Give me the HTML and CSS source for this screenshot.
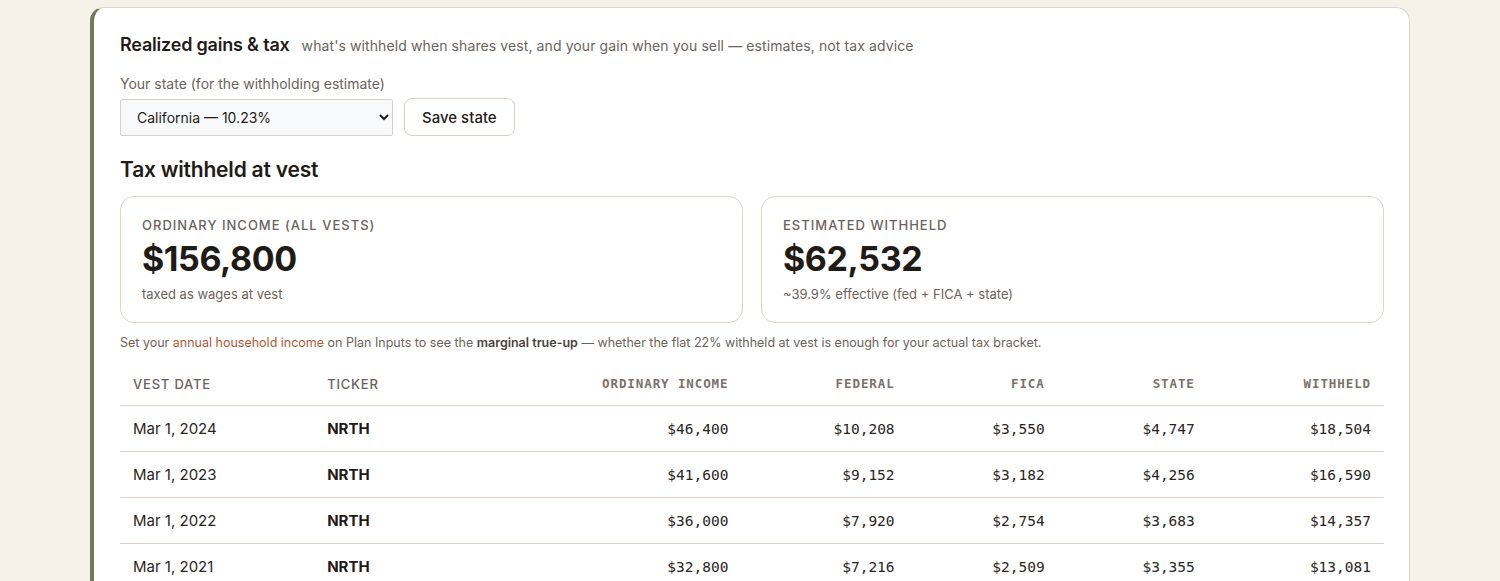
FILE: index.html
```html
<!DOCTYPE html>
<html lang="en">
<head>
    <meta charset="UTF-8">
    <meta name="viewport" content="width=device-width, initial-scale=1.0">
    <title>Realized gains &amp; tax</title>
    <link rel="stylesheet" href="styles.css">
</head>
<body>
    <section class="panel">
        <div class="panel-head">
            <h2>Realized gains &amp; tax</h2>
            <span class="panel-sub">what's withheld when shares vest, and your gain when you sell — estimates, not tax advice</span>
        </div>

        <label class="field-label" for="state">Your state (for the withholding estimate)</label>
        <div class="state-row">
            <select id="state">
                <option>California — 10.23%</option>
                <option>New York — 6.85%</option>
                <option>Washington — 0%</option>
                <option>Texas — 0%</option>
            </select>
            <button type="button" class="btn">Save state</button>
        </div>

        <h3>Tax withheld at vest</h3>
        <div class="stats">
            <div class="stat">
                <div class="stat-label">Ordinary income (all vests)</div>
                <div class="stat-value">$156,800</div>
                <div class="stat-sub">taxed as wages at vest</div>
            </div>
            <div class="stat">
                <div class="stat-label">Estimated withheld</div>
                <div class="stat-value">$62,532</div>
                <div class="stat-sub">~39.9% effective (fed + FICA + state)</div>
            </div>
        </div>

        <p class="note">Set your <a href="#">annual household income</a> on Plan Inputs to see the <strong>marginal true-up</strong> — whether the flat 22% withheld at vest is enough for your actual tax bracket.</p>

        <table class="vests">
            <colgroup>
                <col class="c-date">
                <col class="c-ticker">
                <col class="c-income">
                <col class="c-fed">
                <col class="c-fica">
                <col class="c-state">
                <col class="c-total">
            </colgroup>
            <thead>
                <tr>
                    <th>Vest date</th>
                    <th>Ticker</th>
                    <th class="num">Ordinary income</th>
                    <th class="num">Federal</th>
                    <th class="num">FICA</th>
                    <th class="num">State</th>
                    <th class="num">Withheld</th>
                </tr>
            </thead>
            <tbody id="vestRows"></tbody>
        </table>
    </section>

    <script>
        const vests = [
            { date: 'Mar 1, 2024', ticker: 'NRTH', income: 46400, fed: 10208, fica: 3550, state: 4747, total: 18504 },
            { date: 'Mar 1, 2023', ticker: 'NRTH', income: 41600, fed: 9152, fica: 3182, state: 4256, total: 16590 },
            { date: 'Mar 1, 2022', ticker: 'NRTH', income: 36000, fed: 7920, fica: 2754, state: 3683, total: 14357 },
            { date: 'Mar 1, 2021', ticker: 'NRTH', income: 32800, fed: 7216, fica: 2509, state: 3355, total: 13081 }
        ];

        const money = n => '$' + n.toLocaleString('en-US');
        const tbody = document.getElementById('vestRows');

        vests.forEach(v => {
            const tr = document.createElement('tr');
            tr.innerHTML =
                '<td>' + v.date + '</td>' +
                '<td class="ticker">' + v.ticker + '</td>' +
                '<td class="num">' + money(v.income) + '</td>' +
                '<td class="num">' + money(v.fed) + '</td>' +
                '<td class="num">' + money(v.fica) + '</td>' +
                '<td class="num">' + money(v.state) + '</td>' +
                '<td class="num">' + money(v.total) + '</td>';
            tbody.appendChild(tr);
        });
    </script>
</body>
</html>
```

FILE: styles.css
```css
body {
    margin: 0;
    padding: 7px 0 0;
    background: #f6f2ea;
    font-family: Inter, "Noto Sans", sans-serif;
    color: #1f1b17;
}
.panel {
    max-width: 1320px;
    box-sizing: border-box;
    margin: 0 auto;
    background: #fff;
    border: 1px solid #ddd5c9;
    border-left: 4px solid #6e7a5a;
    border-radius: 14px;
    padding: 24px 25px 0 26px;
    min-height: 600px;
}
.panel-head {
    display: flex;
    align-items: baseline;
    gap: 12px;
}
.panel-head h2 {
    margin: 0;
    font-size: 18px;
    line-height: 25px;
    font-weight: 600;
    letter-spacing: -0.2px;
}
.panel-sub {
    font-size: 14px;
    letter-spacing: 0.1px;
    color: #6b635b;
}
.field-label {
    display: block;
    margin-top: 17px;
    margin-bottom: 4px;
    font-size: 14px;
    line-height: 20px;
    color: #6b635b;
}
.state-row {
    display: flex;
    align-items: center;
    gap: 11px;
}
select {
    width: 273px;
    height: 37px;
    padding: 0 8px 0 12px;
    border: 1px solid #d9d1c5;
    border-radius: 2px;
    background: #f8f9fb;
    color: #1f1b17;
    font-family: inherit;
    font-size: 14px;
}
.btn {
    height: 38px;
    padding: 0 17px;
    background: #fff;
    border: 1px solid #d9d0c4;
    border-radius: 8px;
    font-family: inherit;
    font-size: 15px;
    font-weight: 500;
    color: #1f1b17;
    cursor: pointer;
}
h3 {
    margin: 20px 0 12px;
    font-size: 21px;
    line-height: 28px;
    font-weight: 600;
    letter-spacing: -0.2px;
}
.stats {
    display: grid;
    grid-template-columns: 1fr 1fr;
    gap: 18px;
}
.stat {
    border: 1px solid #ddd5c9;
    border-radius: 14px;
    padding: 19px 21px;
}
.stat-label {
    font-size: 13px;
    line-height: 18px;
    font-weight: 500;
    letter-spacing: 1px;
    text-transform: uppercase;
    color: #6b635b;
}
.stat-value {
    margin-top: 5px;
    font-size: 34px;
    line-height: 40px;
    font-weight: 700;
    letter-spacing: -0.4px;
}
.stat-sub {
    margin-top: 6px;
    font-size: 13px;
    line-height: 18px;
    color: #6b635b;
}
.note {
    margin: 11px 0 0;
    font-size: 12.5px;
    line-height: 18px;
    color: #6b635b;
}
.note a {
    color: #b05a34;
    text-decoration: none;
}
.note strong {
    color: #4a433d;
    font-weight: 600;
}
.vests {
    width: 100%;
    margin-top: 10px;
    border-collapse: collapse;
    table-layout: fixed;
}
.c-date { width: 194px; }
.c-ticker { width: 200px; }
.c-income { width: 227px; }
.c-fed { width: 166px; }
.c-fica { width: 150px; }
.c-state { width: 150px; }
.c-total { width: 176px; }
.vests th {
    height: 43px;
    padding: 0 13px;
    text-align: left;
    font-size: 13px;
    font-weight: 500;
    letter-spacing: 0.8px;
    text-transform: uppercase;
    color: #6b635b;
    border-bottom: 1px solid #d9cfc3;
}
.vests th.num {
    font-family: "DejaVu Sans Mono", "Liberation Mono", monospace;
    font-weight: 700;
    font-size: 12.5px;
    letter-spacing: 0.9px;
    color: #7a726a;
}
.vests td {
    height: 45px;
    padding: 0 13px;
    font-size: 15px;
    color: #2a2521;
    border-bottom: 1px solid #d9cfc3;
}
.vests td.ticker {
    font-weight: 700;
    color: #1f1b17;
}
.vests .num {
    text-align: right;
}
.vests td.num {
    font-family: "DejaVu Sans Mono", "Liberation Mono", monospace;
    font-size: 14.5px;
}
```
